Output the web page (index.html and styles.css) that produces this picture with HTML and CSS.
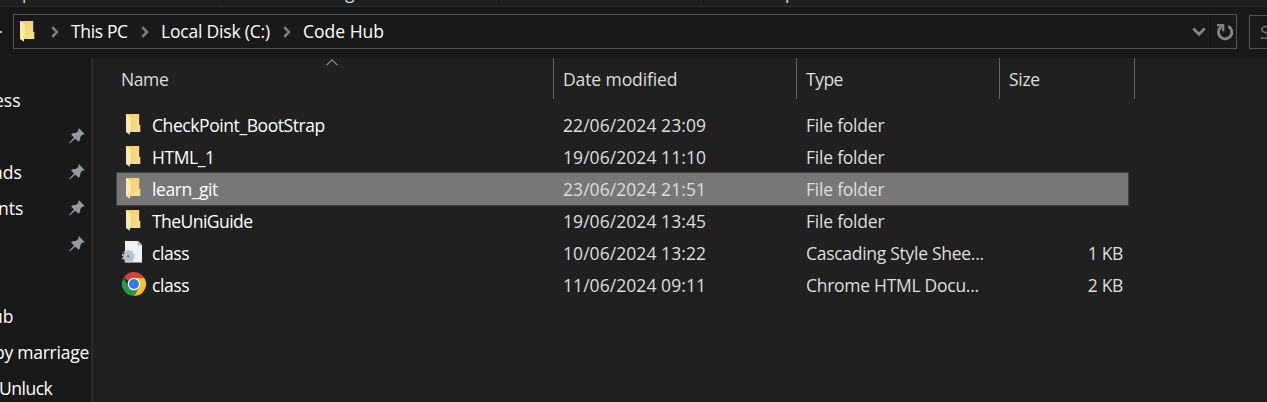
FILE: index.html
```
<!DOCTYPE html>
<html lang="en">
<head>
<meta charset="utf-8">
<title>Code Hub</title>
<link rel="stylesheet" href="styles.css">
</head>
<body>
<svg width="0" height="0" class="defs" aria-hidden="true">
  <defs>
    <linearGradient id="fold" x1="0" y1="0" x2="1" y2="1"><stop offset="0" stop-color="#f0ca68"/><stop offset="1" stop-color="#ffe08a"/></linearGradient>
    <symbol id="folder" viewBox="0 0 16 22">
      <path d="M0 1H13.2V12H14.3V19H4.5L0 18Z" fill="url(#fold)"/>
      <path d="M0 1L5 4V16.5L4 17.3V21.8L0 19Z" fill="#ffe9a6"/>
    </symbol>
    <symbol id="pin" viewBox="0 0 16 16">
      <path d="M10 0.3L15.7 5.9L14.2 6.8L13.4 6.5L11.2 9.2C11.4 11 11 12.5 9.8 13.8L6.2 10.8L0.6 15.6L0 15L5 9.6L2 6.2C3.4 5.2 5 4.9 6.7 5.1L9.5 2.7L9.2 1.6Z" fill="#929ba1"/>
    </symbol>
    <symbol id="chev" viewBox="0 0 8 12">
      <path d="M1.3 1.2L6 6L1.3 10.8" fill="none" stroke="#7e7e7e" stroke-width="2.6"/>
    </symbol>
  </defs>
</svg>
<div class="window">
  <div class="ribbon">
    <span class="tail t1">p</span><i></i><span class="tail t2">g</span><i class="b"></i><i class="c"></i><span class="tail t3">p</span>
  </div>
  <div class="nav">
    <span class="up"></span>
    <div class="address">
      <svg class="folder" width="16" height="22"><use href="#folder"/></svg>
      <svg class="chev c1" width="8" height="12"><use href="#chev"/></svg>
      <span class="crumb k1">This PC</span>
      <svg class="chev c2" width="8" height="12"><use href="#chev"/></svg>
      <span class="crumb k2">Local Disk (C:)</span>
      <svg class="chev c3" width="8" height="12"><use href="#chev"/></svg>
      <span class="crumb k3">Code Hub</span>
      <svg class="drop" width="14" height="10" viewBox="0 0 14 10"><path d="M1.3 1.5L7 7.2L12.7 1.5" fill="none" stroke="#858585" stroke-width="2.8"/></svg>
      <div class="refresh"><svg width="18" height="18" viewBox="0 0 18 18"><path d="M12.3 3.2A6.7 6.7 0 1 1 4.6 4.2" fill="none" stroke="#858585" stroke-width="2.8"/><path d="M1 1H8.3V8.3H6V5.5L3.8 3.4H1Z" fill="#858585"/></svg></div>
    </div>
    <div class="search"><span>S</span></div>
  </div>
  <div class="body">
    <div class="side">
      <div class="item s1"><span>ess</span></div>
      <div class="item"><svg class="pin" width="16" height="16"><use href="#pin"/></svg></div>
      <div class="item s2"><span>ads</span><svg class="pin" width="16" height="16"><use href="#pin"/></svg></div>
      <div class="item s3"><span>nts</span><svg class="pin" width="16" height="16"><use href="#pin"/></svg></div>
      <div class="item"><svg class="pin" width="16" height="16"><use href="#pin"/></svg></div>
      <div class="item"></div>
      <div class="item s4"><span>ub</span></div>
      <div class="item s5"><span>by marriage</span></div>
      <div class="item s6"><span>Unluck</span></div>
    </div>
    <div class="main">
      <div class="head">
        <div class="h1"><span>Name</span><svg class="sort" width="12" height="7" viewBox="0 0 12 7"><path d="M0.6 6.2L6 0.9L11.4 6.2" fill="none" stroke="#9a9a9a" stroke-width="1.1"/></svg></div>
        <div class="h2"><span>Date modified</span></div>
        <div class="h3"><span>Type</span></div>
        <div class="h4"><span>Size</span></div>
      </div>
      <div class="rows">
        <div class="row"><div class="ico"><svg class="folder" width="16" height="22"><use href="#folder"/></svg></div><div class="name"><span class="n1">CheckPoint_BootStrap</span></div><div class="date"><span>22/06/2024 23:09</span></div><div class="type"><span>File folder</span></div><div class="size"></div></div>
        <div class="row"><div class="ico"><svg class="folder" width="16" height="22"><use href="#folder"/></svg></div><div class="name"><span class="n2">HTML_1</span></div><div class="date"><span>19/06/2024 11:10</span></div><div class="type"><span>File folder</span></div><div class="size"></div></div>
        <div class="row selected"><div class="ico"><svg class="folder" width="16" height="22"><use href="#folder"/></svg></div><div class="name"><span class="n3">learn_git</span></div><div class="date"><span>23/06/2024 21:51</span></div><div class="type"><span>File folder</span></div><div class="size"></div></div>
        <div class="row"><div class="ico"><svg class="folder" width="16" height="22"><use href="#folder"/></svg></div><div class="name"><span class="n4">TheUniGuide</span></div><div class="date"><span>19/06/2024 13:45</span></div><div class="type"><span>File folder</span></div><div class="size"></div></div>
        <div class="row"><div class="ico">
          <svg class="file" width="24" height="24" viewBox="0 0 24 24"><path d="M3 1H16L20 5V22.6H3Z" fill="#f1f2f3"/><path d="M15.5 1L20 5.5H15.5Z" fill="#b9bec3"/><circle cx="6.3" cy="16.3" r="5.6" fill="none" stroke="#a9b8c4" stroke-width="1.8" stroke-dasharray="2.1 1.4"/><circle cx="6.3" cy="16.3" r="3.6" fill="#e6ecf0" stroke="#b3c1cc" stroke-width="3"/><circle cx="6.3" cy="16.3" r="1.6" fill="#76889a"/></svg>
        </div><div class="name"><span class="n5">class</span></div><div class="date"><span>10/06/2024 13:22</span></div><div class="type"><span class="y1">Cascading Style Shee...</span></div><div class="size"><span>1 KB</span></div></div>
        <div class="row"><div class="ico">
          <svg class="file" width="24" height="24" viewBox="0 0 24 24"><path d="M12 12L1.6 6A12 12 0 0 1 22.4 6Z" fill="#e33b2e"/><path d="M12 6H22.4A12 12 0 0 1 12 24L17.2 15Z" fill="#fcc31e"/><path d="M1.6 6L6.8 15L12 18L17.2 15L12 24A12 12 0 0 1 1.6 6Z" fill="#249a48"/><circle cx="12" cy="12" r="6.3" fill="#fff"/><circle cx="12" cy="12" r="5" fill="#2f7de9"/></svg>
        </div><div class="name"><span class="n5">class</span></div><div class="date"><span>11/06/2024 09:11</span></div><div class="type"><span class="y2">Chrome HTML Docu...</span></div><div class="size"><span>2 KB</span></div></div>
      </div>
    </div>
  </div>
</div>
</body>
</html>
```
FILE: styles.css
```
* { box-sizing: border-box; }
body { margin: 0; background: #191919; font: 17.5px/24px "Open Sans", "Noto Sans", sans-serif; color: #fff; }
.defs { position: absolute; }
.window { width: 1267px; height: 402px; overflow: hidden; display: flex; flex-direction: column; }
svg { display: block; flex: none; }
span { white-space: nowrap; }

.ribbon { height: 7px; flex: none; background: #202020; border-bottom: 1px solid #2b2b2b; display: flex; overflow: hidden; padding-left: 22px; color: #ddd; }
.ribbon i { width: 1px; height: 3px; background: #161616; margin-left: 190px; }
.ribbon i.b { margin-left: 143px; }
.ribbon i.c { margin-left: 204px; }
.tail { margin-top: -20px; width: 10px; height: 24px; }
.t2 { margin-left: 122px; }
.t3 { margin-left: 81px; }

.nav { height: 51px; flex: none; padding-top: 7px; display: flex; }
.nav > * { flex: none; }
.up { width: 2px; height: 2px; background: #bbb; margin: 17px 11px 0 0; }
.address { width: 1224px; height: 35px; border: 1px solid #535353; display: flex; align-items: center; padding-left: 6px; }
.address .folder { margin-top: -1px; }
.c1 { margin-left: 15px; }
.c2 { margin-left: 12px; }
.c3 { margin-left: 12px; }
.crumb { margin-left: 12px; margin-top: -1px; }
.k1 { width: 58px; letter-spacing: -0.35px; }
.k2 { width: 110px; letter-spacing: -0.2px; }
.k3 { width: 82px; }
.drop { margin-left: auto; }
.refresh { width: 26px; height: 33px; margin-left: 4px; border-left: 1px solid #141414; display: flex; align-items: center; padding-left: 5px; }
.search { width: 40px; height: 34px; margin: 1px 0 0 12px; border: 1px solid #535353; padding: 4px 0 0 10px; color: #777; }

.body { flex: 1; display: flex; }
.side { width: 91px; padding-top: 24px; flex: none; overflow: hidden; }
.item { height: 36px; display: flex; align-items: center; }
.pin { margin: 0 6px 0 auto; }
.s1 span { margin-left: -6px; }
.s2 span { margin-left: -7px; }
.s3 span { margin-left: -2px; }
.s4 span { margin-left: -8px; }
.s5 span { margin-left: -6px; letter-spacing: -0.25px; }
.s6 span { margin-left: -1px; letter-spacing: -0.5px; }

.main { flex: 1; background: #202020; border-left: 2px solid #2b2b2b; }
.head { height: 41px; display: flex; color: #dedede; }
.head > div { border-right: 1px solid #636363; padding: 9px 0 0 9px; }
.head .h1 { width: 461px; padding-left: 28px; display: flex; align-items: flex-start; letter-spacing: -0.4px; }
.head .h2 { width: 243px; letter-spacing: -0.1px; }
.head .h3 { width: 203px; letter-spacing: -0.5px; }
.head .h4 { width: 135px; letter-spacing: -0.3px; }
.sort { margin: -8px 0 0 158px; }
.rows { padding: 10px 0 0 23px; }
.row { width: 1013px; height: 32px; display: flex; align-items: center; color: #dedede; border: 1px solid transparent; }
.row.selected { height: 34px; margin: -1px 0; background: #777; border-color: #404040; }
.ico { width: 31px; padding-left: 5px; }
.ico .folder { margin: -2px 0 0 4px; }
.ico .file { margin-top: -2px; }
.name { width: 415px; padding-left: 4px; color: #fff; letter-spacing: -0.42px; }
.n4 { letter-spacing: -0.55px; }
.date { width: 243px; letter-spacing: 0.06px; }
.type { width: 203px; letter-spacing: -0.22px; }
.y1, .y2 { letter-spacing: -0.28px; }
.size { width: 114px; text-align: right; letter-spacing: -0.35px; }
```
